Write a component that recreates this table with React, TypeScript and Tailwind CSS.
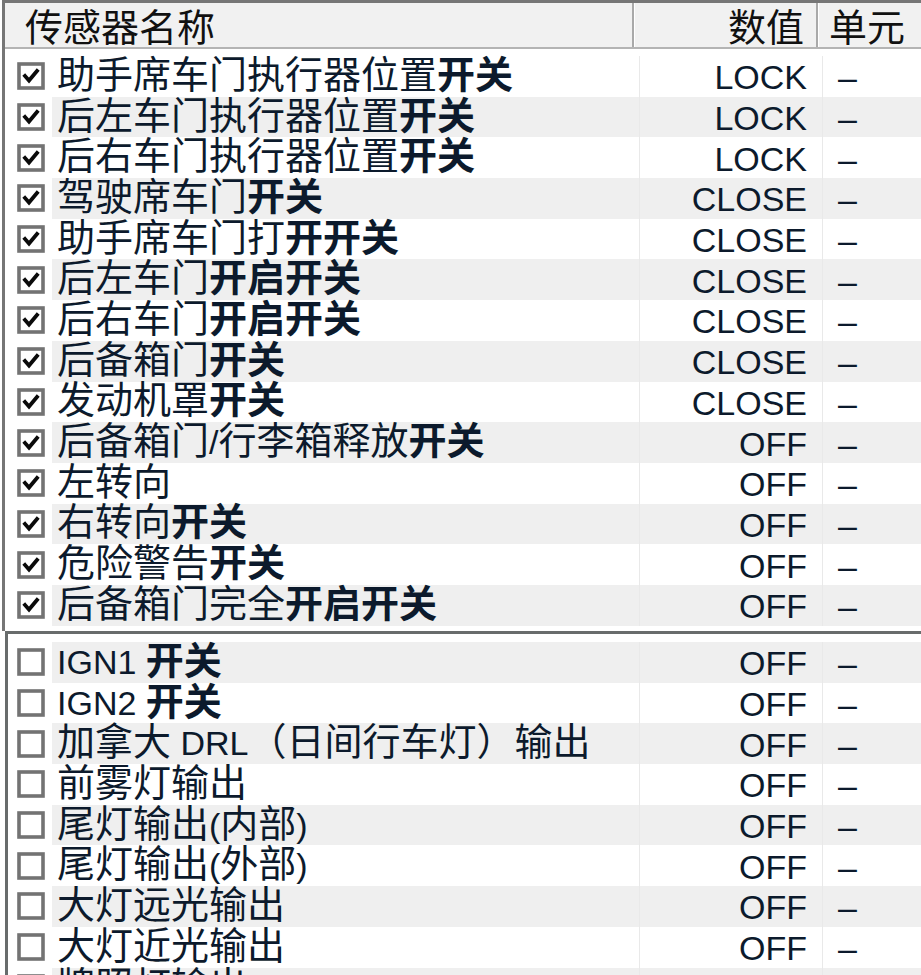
import React from "react";

// *...* marks the bold part of a name
const upper = [
  ["助手席车门执行器位置*开关*", "LOCK"],
  ["后左车门执行器位置*开关*", "LOCK"],
  ["后右车门执行器位置*开关*", "LOCK"],
  ["驾驶席车门*开关*", "CLOSE"],
  ["助手席车门打*开开关*", "CLOSE"],
  ["后左车门*开启开关*", "CLOSE"],
  ["后右车门*开启开关*", "CLOSE"],
  ["后备箱门*开关*", "CLOSE"],
  ["发动机罩*开关*", "CLOSE"],
  ["后备箱门/行李箱释放*开关*", "OFF"],
  ["左转向", "OFF"],
  ["右转向*开关*", "OFF"],
  ["危险警告*开关*", "OFF"],
  ["后备箱门完全*开启开关*", "OFF"],
];

const lower = [
  ["IGN1 *开关*", "OFF"],
  ["IGN2 *开关*", "OFF"],
  ["加拿大 DRL（日间行车灯）输出", "OFF"],
  ["前雾灯输出", "OFF"],
  ["尾灯输出(内部)", "OFF"],
  ["尾灯输出(外部)", "OFF"],
  ["大灯远光输出", "OFF"],
  ["大灯近光输出", "OFF"],
  ["牌照灯输出", "OFF"],
];

function Box({ checked }: { checked: boolean }) {
  return (
    <svg width="28" height="28" viewBox="0 0 28 28" className="shrink-0">
      <rect x="2" y="2" width="24" height="24" fill="#fff" stroke="#737373" strokeWidth="3.6" />
      {checked && <path d="M8 14 L12 18.5 L20 9" fill="none" stroke="#0a0a0a" strokeWidth="3.8" strokeLinecap="square" />}
    </svg>
  );
}

function Name({ text }: { text: string }) {
  const parts = text.split("*");
  return (
    <span className="whitespace-pre">
      {parts.map((p, i) =>
        p.split(/([A-Za-z0-9()/ ]+)/).filter(Boolean).map((s, j) => {
          const latin = /^[A-Za-z0-9()/ ]+$/.test(s);
          return (
            <span
              key={i + "-" + j}
              className={`${latin ? "text-[34px]" : "text-[38px]"} ${i % 2 === 1 ? "font-bold" : "font-normal"}`}
            >
              {s}
            </span>
          );
        })
      )}
    </span>
  );
}

function Row({ name, value, shade, checked, boxCell }: { name: string; value: string; shade: boolean; checked: boolean; boxCell: string }) {
  const bg = shade ? "bg-[#efefef]" : "bg-white";
  return (
    <div className="flex h-[40.7px] text-[#0c1a2c]">
      <div className={`flex shrink-0 items-center bg-white ${boxCell}`}>
        <Box checked={checked} />
      </div>
      <div className={`flex w-[588px] shrink-0 items-center border-r border-[#e9e9e9] pl-[5px] pt-[5px] leading-[34px] ${bg}`}>
        <Name text={name} />
      </div>
      <div className={`flex w-[183px] shrink-0 items-center justify-end border-r border-[#e9e9e9] pr-[15px] pt-[2px] text-[34px] leading-[36px] ${bg}`}>
        {value}
      </div>
      <div className={`flex flex-1 items-center pl-[15px] pt-[2px] text-[34px] leading-[36px] ${bg}`}>–</div>
    </div>
  );
}

export default function App() {
  return (
    <div className="h-[975px] w-[921px] overflow-hidden bg-white font-['Liberation_Sans','Noto_Sans_CJK_SC',sans-serif]">
      {/* upper list */}
      <div className="ml-[2px] h-[631px] overflow-hidden border-l-[3px] border-t-[3px] border-[#767676]">
        <div className="flex h-[46px] border-b-2 border-[#b4b4b4] bg-[#f1f1f1] text-[38px] leading-[38px] text-[#111]">
          <div className="flex w-[629px] shrink-0 items-center border-r-2 border-[#a9a9a9] pl-[20px] pt-[5px]">传感器名称</div>
          <div className="flex w-[184px] shrink-0 items-center justify-end border-l border-r-2 border-l-white border-r-[#a9a9a9] pr-[12px] pt-[5px]">数值</div>
          <div className="flex flex-1 items-center border-l border-white pl-[10px] pt-[5px]">单元</div>
        </div>
        <div className="pt-[7px]">
          {upper.map(([n, v], i) => (
            <Row key={i} name={n} value={v} shade={i % 2 === 1} checked boxCell="w-[47px] pl-[12px]" />
          ))}
        </div>
      </div>
      {/* lower list */}
      <div className="ml-[5px] border-l-[3px] border-t-[3px] border-[#686c6c] pt-[8px]">
        {lower.map(([n, v], i) => (
          <Row key={i} name={n} value={v} shade={i % 2 === 0} checked={false} boxCell="w-[44px] pl-[9px]" />
        ))}
      </div>
    </div>
  );
}
